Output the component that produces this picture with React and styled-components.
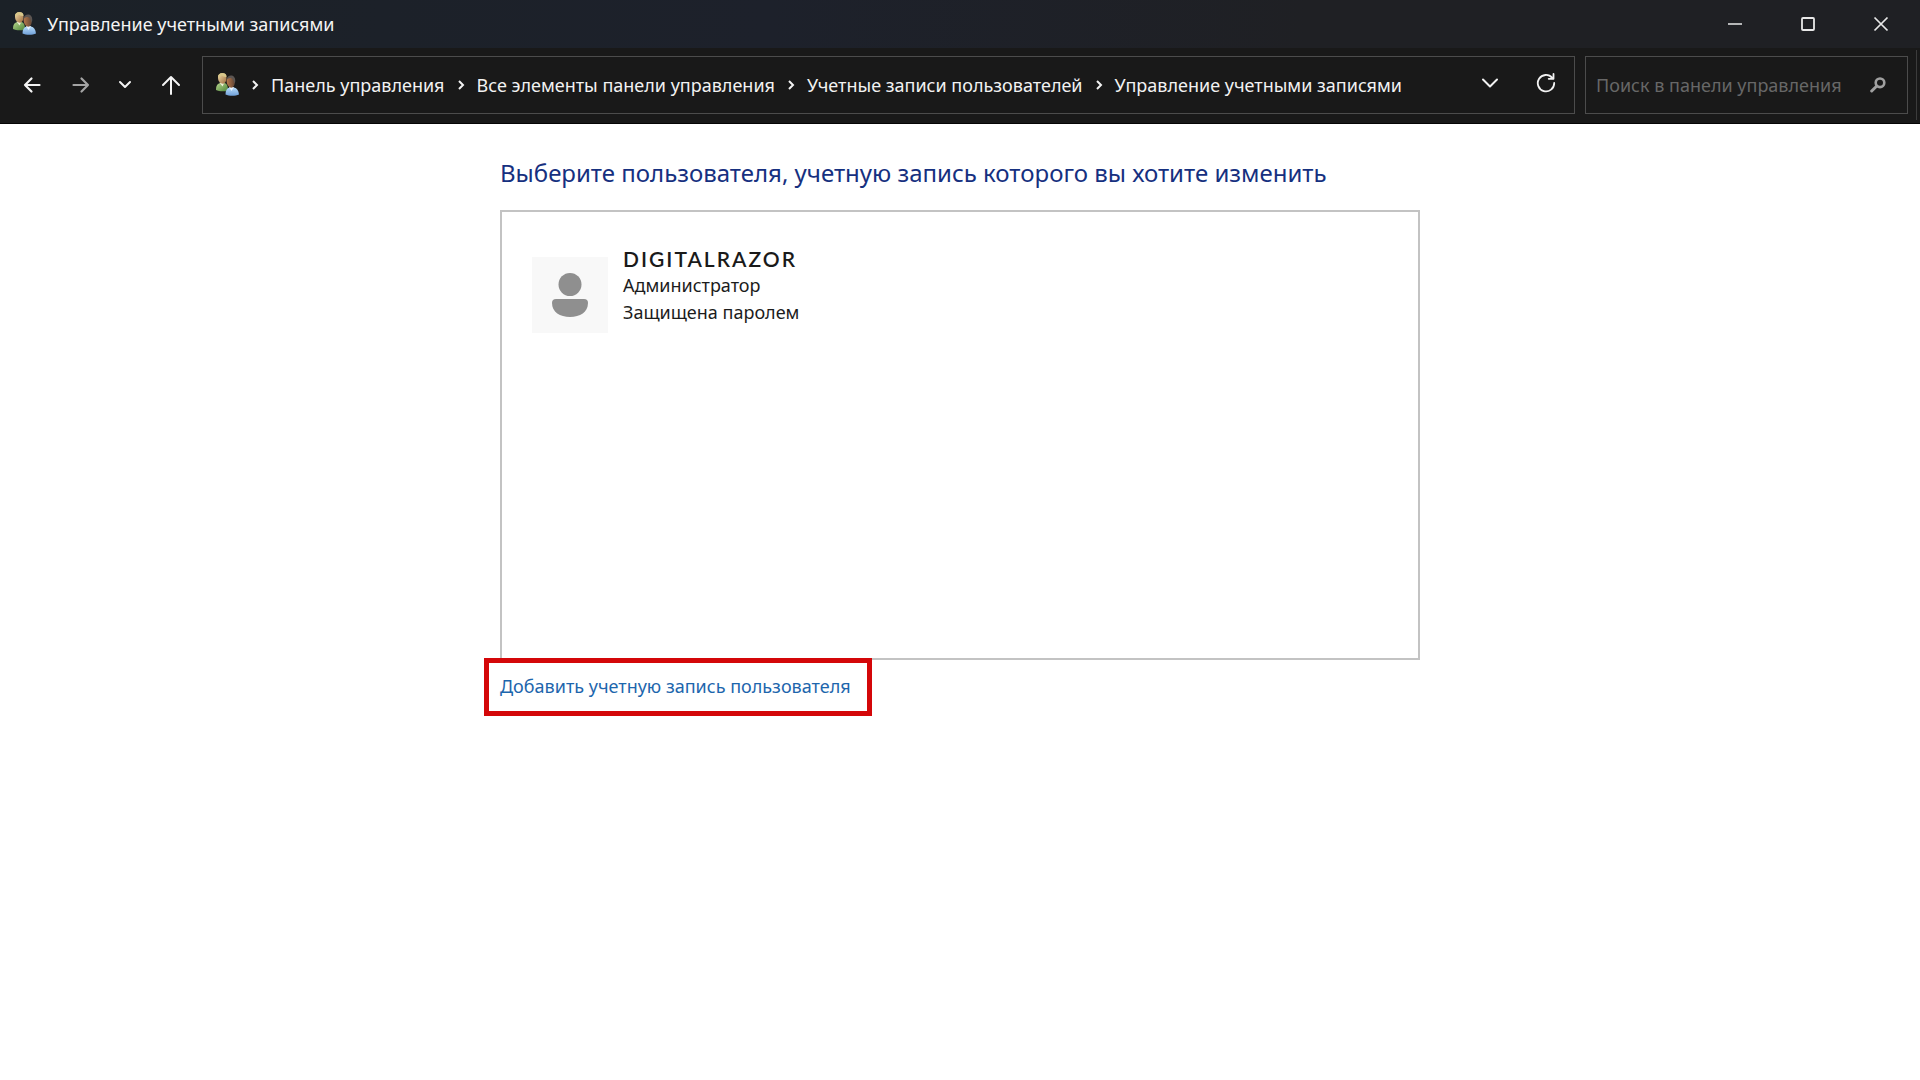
import React from "react";
import styled, { createGlobalStyle } from "styled-components";

const GlobalStyle = createGlobalStyle`
  * { box-sizing: border-box; }
  body {
    margin: 0;
    background: #ffffff;
    color: #1a1a1a;
    font-family: "Noto Sans", "Open Sans", sans-serif;
    font-size: 18px;
    line-height: 24px;
  }
  button, input { font: inherit; color: inherit; margin: 0; padding: 0; border: 0; background: none; }
  a { color: inherit; text-decoration: none; }
  svg { display: block; }
`;

const TitleBar = styled.header`
  display: flex;
  align-items: center;
  height: 48px;
  padding-left: 12px;
  background: linear-gradient(90deg, #1b2127 0%, #1d212b 40%, #1f2024 68%, #1f2024 100%);
  color: #f4f4f4;
`;

const WindowTitle = styled.h1`
  flex: 1;
  margin: 0 0 0 11px;
  font-size: 18px;
  font-weight: 400;
  line-height: 24px;
`;

const WindowButton = styled.button`
  display: flex;
  align-items: center;
  justify-content: center;
  width: 73px;
  height: 48px;
  color: #e8e8e8;
  &:last-child { margin-right: 3px; }
`;

const NavBar = styled.nav`
  display: flex;
  align-items: stretch;
  height: 76px;
  padding: 8px 3px 9px 8px;
  background: #191919;
  border-bottom: 1px solid #050505;
  color: #f2f2f2;
`;

const NavButton = styled.button`
  display: flex;
  align-items: center;
  justify-content: center;
  width: ${(p) => p.$width}px;
  color: ${(p) => (p.$dim ? "#a4a4a4" : "#f4f4f4")};
`;

const AddressBar = styled.div`
  display: flex;
  align-items: center;
  flex: 1;
  margin-left: 4px;
  padding: 0 0 0 12px;
  border: 1px solid #4c4c4c;
`;

const Crumbs = styled.ol`
  display: flex;
  flex: 1;
  margin: 0;
  padding: 0;
  list-style: none;
`;

const Crumb = styled.li`
  display: flex;
  align-items: center;
  white-space: nowrap;
  svg { margin: 0 11px; }
`;

const ToolButton = styled.button`
  display: flex;
  align-items: center;
  justify-content: center;
  width: 56px;
  height: 56px;
  padding-bottom: 4px;
`;

const SearchBox = styled.form`
  display: flex;
  align-items: center;
  width: 323px;
  margin: 0 8px 0 10px;
  padding: 0 11px 0 10px;
  border: 1px solid #4c4c4c;
  color: #a0a0a0;
`;

const SearchInput = styled.input`
  flex: 1;
  min-width: 0;
  outline: none;
  &::placeholder { color: #676767; opacity: 1; }
`;

const SearchButton = styled.button`
  display: flex;
  align-items: center;
  justify-content: center;
  width: 36px;
  height: 40px;
`;

const Edge = styled.span`
  width: 1px;
  margin: -6px 0;
  background: #3c3c3c;
`;

const Main = styled.main`
  width: 100%;
  max-width: 920px;
  margin: 0 auto;
  padding-top: 31px;
`;

const Heading = styled.h2`
  margin: 0 0 19px;
  color: #16307f;
  font-size: 24px;
  font-weight: 400;
  line-height: 36px;
`;

const Accounts = styled.section`
  min-height: 450px;
  padding: 34px 30px;
  border: 2px solid #c3c3c3;
`;

const Account = styled.a`
  display: inline-flex;
  gap: 15px;
  color: #1c1c1c;
`;

const Avatar = styled.span`
  display: flex;
  align-items: center;
  justify-content: center;
  width: 76px;
  height: 76px;
  margin-top: 11px;
  background: #f8f8f8;
`;

const AccountText = styled.span`
  display: flex;
  flex-direction: column;
  line-height: 27px;
`;

const AccountName = styled.strong`
  color: #1a1a1a;
  font-family: Lato, sans-serif;
  font-size: 21px;
  font-weight: 600;
  letter-spacing: 2px;
  line-height: 26px;
`;

const AddLink = styled.a`
  display: inline-block;
  margin: -2px 0 0 -16px;
  padding: 11px 16px 13px 11px;
  border: 5px solid #d40709;
  background: #ffffff;
  color: #1d66ad;
  position: relative;
`;

const stroke = { fill: "none", stroke: "currentColor", strokeWidth: 2, strokeLinecap: "round", strokeLinejoin: "round" };

function UsersIcon() {
  return (
    <svg width="24" height="24" viewBox="0 0 24 24" aria-hidden="true">
      <defs>
        <linearGradient id="green" x1="0" y1="0" x2="1" y2="1">
          <stop offset="0" stopColor="#b7d58d" />
          <stop offset="1" stopColor="#4c8438" />
        </linearGradient>
        <linearGradient id="blue" x1="0" y1="0" x2="0" y2="1">
          <stop offset="0" stopColor="#b7dcfb" />
          <stop offset="1" stopColor="#6e9fd8" />
        </linearGradient>
        <linearGradient id="fair" x1="0" y1="0" x2="1" y2="1">
          <stop offset="0" stopColor="#f3deaa" />
          <stop offset="1" stopColor="#9a6a3d" />
        </linearGradient>
        <linearGradient id="tan" x1="0" y1="0" x2="1" y2="0">
          <stop offset="0" stopColor="#b9794b" />
          <stop offset="1" stopColor="#5d4435" />
        </linearGradient>
      </defs>
      <path d="M1 17c0-4.500 1.500-6.500 4.500-7h4c2.500.6 3.500 3 3.500 7.500-3 1.200-9 1.200-12-.5z" fill="url(#green)" />
      <path d="M4.500 9.500l3 4 2-4z" fill="#eef2d8" />
      <path d="M3 4.500C3 1.500 5 .3 7.500.3s4 1.400 4 4.400c0 3.500-1.500 6-3.800 6S3 8.500 3 4.500z" fill="url(#fair)" />
      <path d="M3 4.500C2.800 1.500 4.500 0 7.300 0s4.500 1.500 4.200 4C9.500 4.300 8 3.500 6.500 2.600 5.500 3.600 4.500 4.200 3 4.500z" fill="#d8c78a" />
      <path d="M10.500 21.500c0-4 1.500-6.500 4-7h4.500c3 .5 4.500 3 5 7-3.500 1.800-10 1.800-13.500 0z" fill="url(#blue)" />
      <path d="M14 14l2.500 4 2.500-4z" fill="#e9f5ff" />
      <path d="M11.600 7.800c0-3 2-4.800 4.400-4.800s4 1.800 4 4.800c0 4-1.500 7-3.700 7s-4.700-3-4.700-7z" fill="url(#tan)" />
      <path d="M11.700 7C11.900 4 13.700 2.500 16 2.500S20.400 4.500 20.300 8c-.1 1-.4 2-.8 2.500C19 8 18 6 16.500 5.200 15 4.800 13 5.200 11.700 7z" fill="#5b5552" />
    </svg>
  );
}

function ChevronRight() {
  return (
    <svg width="10" height="12" viewBox="0 0 10 12" aria-hidden="true">
      <path d="M3 2L7 6 3 10" {...stroke} strokeLinecap="butt" strokeLinejoin="miter" />
    </svg>
  );
}

const crumbs = [
  "Панель управления",
  "Все элементы панели управления",
  "Учетные записи пользователей",
  "Управление учетными записями",
];

export default function App() {
  return (
    <>
      <GlobalStyle />
      <TitleBar>
        <UsersIcon />
        <WindowTitle>Управление учетными записями</WindowTitle>
        <WindowButton aria-label="Свернуть">
          <svg width="16" height="16" viewBox="0 0 16 16"><path d="M1 8h14" stroke="currentColor" strokeWidth="1.500" /></svg>
        </WindowButton>
        <WindowButton aria-label="Развернуть">
          <svg width="16" height="16" viewBox="0 0 16 16"><rect x="2" y="2" width="12" height="12" rx="1" fill="none" stroke="currentColor" strokeWidth="1.800" /></svg>
        </WindowButton>
        <WindowButton aria-label="Закрыть">
          <svg width="16" height="16" viewBox="0 0 16 16"><path d="M1.500 1.500l13 13M14.500 1.500l-13 13" stroke="currentColor" strokeWidth="1.700" /></svg>
        </WindowButton>
      </TitleBar>
      <NavBar aria-label="Навигация">
        <NavButton $width={48} aria-label="Назад">
          <svg width="18" height="18" viewBox="0 0 18 18"><path d="M16.500 9H2M8.500 2.500L2 9l6.500 6.500" {...stroke} strokeWidth="2.200" /></svg>
        </NavButton>
        <NavButton $width={50} $dim aria-label="Вперед">
          <svg width="18" height="18" viewBox="0 0 18 18"><path d="M1.500 9H16M9.500 2.500L16 9l-6.500 6.500" {...stroke} strokeWidth="2.200" /></svg>
        </NavButton>
        <NavButton $width={38} aria-label="Последние расположения">
          <svg width="14" height="14" viewBox="0 0 14 14"><path d="M2 4l5 5 5-5" {...stroke} /></svg>
        </NavButton>
        <NavButton $width={54} aria-label="Вверх">
          <svg width="20" height="20" viewBox="0 0 20 20"><path d="M10 19V2M2 10l8-8 8 8" {...stroke} /></svg>
        </NavButton>
        <AddressBar>
          <UsersIcon />
          <Crumbs>
            {crumbs.map((label) => (
              <Crumb key={label}>
                <ChevronRight />
                <a href="#">{label}</a>
              </Crumb>
            ))}
          </Crumbs>
          <ToolButton aria-label="Показать адреса">
            <svg width="18" height="18" viewBox="0 0 18 18"><path d="M2 5.500l7 7 7-7" {...stroke} /></svg>
          </ToolButton>
          <ToolButton aria-label="Обновить">
            <svg width="20" height="20" viewBox="0 0 20 20"><path d="M16.200 4.800A8.200 8.200 0 1 0 18.200 10M17.500 1v4.800h-4.800" {...stroke} strokeWidth="1.800" /></svg>
          </ToolButton>
        </AddressBar>
        <SearchBox role="search">
          <SearchInput type="text" aria-label="Поиск" placeholder="Поиск в панели управления" />
          <SearchButton type="button" aria-label="Найти">
            <svg width="16" height="16" viewBox="0 0 16 16"><circle cx="10" cy="5.800" r="4.300" fill="none" stroke="currentColor" strokeWidth="2.600" /><path d="M6.800 9L1.700 14" stroke="currentColor" strokeWidth="3" strokeLinecap="round" /></svg>
          </SearchButton>
        </SearchBox>
        <Edge />
      </NavBar>
      <Main>
        <Heading>Выберите пользователя, учетную запись которого вы хотите изменить</Heading>
        <Accounts>
          <Account href="#">
            <Avatar>
              <svg width="38" height="46" viewBox="0 0 38 46" aria-hidden="true">
                <circle cx="19" cy="12.500" r="11.500" fill="#8f8f8f" />
                <path d="M5 27h28a4 4 0 0 1 4 4c0 9-8 14-18 14S1 40 1 31a4 4 0 0 1 4-4z" fill="#8f8f8f" />
              </svg>
            </Avatar>
            <AccountText>
              <AccountName>DIGITALRAZOR</AccountName>
              <span>Администратор</span>
              <span>Защищена паролем</span>
            </AccountText>
          </Account>
        </Accounts>
        <AddLink href="#">Добавить учетную запись пользователя</AddLink>
      </Main>
    </>
  );
}
